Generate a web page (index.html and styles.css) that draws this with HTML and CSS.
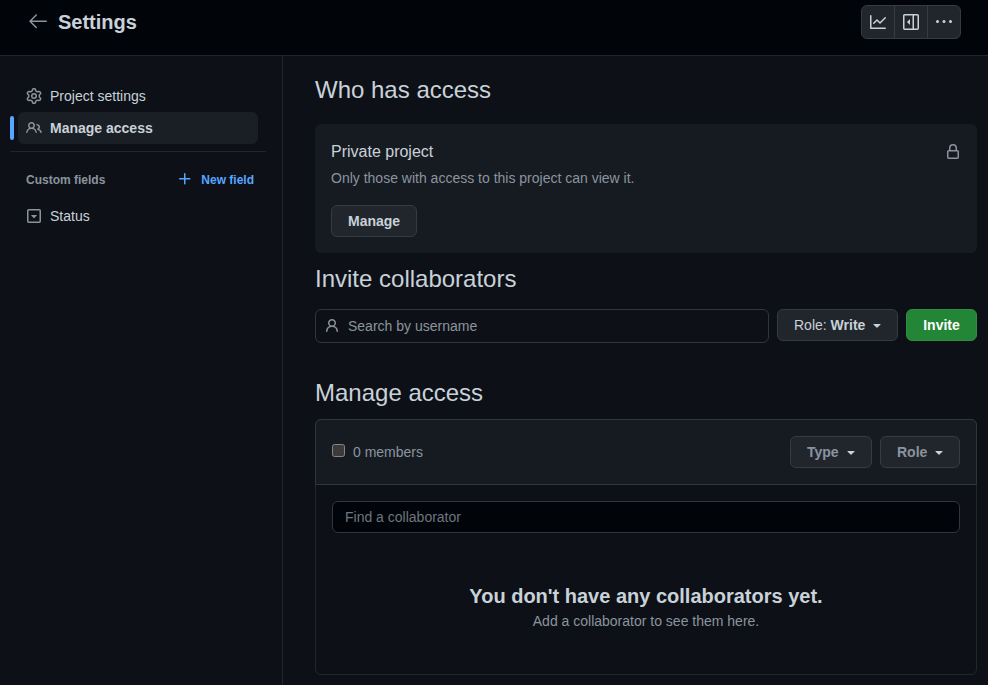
FILE: index.html
```html
<!DOCTYPE html>
<html lang="en">
<head>
<meta charset="utf-8">
<title>Settings</title>
<link rel="stylesheet" href="styles.css">
</head>
<body>
<header class="topbar">
  <svg class="back" width="24" height="24" viewBox="0 0 24 24"><path d="M10.78 19.03a.75.75 0 0 1-1.06 0l-6.25-6.25a.75.75 0 0 1 0-1.06l6.25-6.25a.749.749 0 0 1 1.275.326.749.749 0 0 1-.215.734L5.81 11.5h14.44a.75.75 0 0 1 0 1.5H5.81l4.97 4.97a.75.75 0 0 1 0 1.06Z"/></svg>
  <h1 class="title">Settings</h1>
  <div class="button-group">
    <button class="group-button"><svg width="16" height="16" viewBox="0 0 16 16"><path d="M1.5 1.75V13.5h13.75a.75.75 0 0 1 0 1.5H.75a.75.75 0 0 1-.75-.75V1.75a.75.75 0 0 1 1.5 0Zm14.28 2.53-5.25 5.25a.75.75 0 0 1-1.06 0L7 7.06 4.28 9.78a.751.751 0 0 1-1.042-.018.751.751 0 0 1-.018-1.042l3.25-3.25a.75.75 0 0 1 1.06 0L10 7.94l4.72-4.72a.751.751 0 0 1 1.042.018.751.751 0 0 1 .018 1.042Z"/></svg></button>
    <button class="group-button"><svg width="16" height="16" viewBox="0 0 16 16"><path d="m4.177 7.823 2.396-2.396A.25.25 0 0 1 7 5.604v4.792a.25.25 0 0 1-.427.177L4.177 8.177a.25.25 0 0 1 0-.354Z"/><path d="M0 1.75C0 .784.784 0 1.75 0h12.5C15.216 0 16 .784 16 1.75v12.5A1.75 1.75 0 0 1 14.25 16H1.75A1.75 1.75 0 0 1 0 14.25Zm1.75-.25a.25.25 0 0 0-.25.25v12.5c0 .138.112.25.25.25H9.5v-13Zm12.5 13a.25.25 0 0 0 .25-.25V1.75a.25.25 0 0 0-.25-.25H11v13Z"/></svg></button>
    <button class="group-button"><svg width="16" height="16" viewBox="0 0 16 16"><circle cx="1.5" cy="7.5" r="1.5"/><circle cx="8" cy="7.5" r="1.5"/><circle cx="14.5" cy="7.5" r="1.5"/></svg></button>
  </div>
</header>
<div class="layout">
  <nav class="sidebar">
    <a class="nav-item"><svg width="16" height="16" viewBox="0 0 16 16"><path d="M8 0a8.2 8.2 0 0 1 .701.031C9.444.095 9.99.645 10.16 1.29l.288 1.107c.018.066.079.158.212.224.231.114.454.243.668.386.123.082.233.09.299.071l1.103-.303c.644-.176 1.392.021 1.82.63.27.385.506.792.704 1.218.315.675.111 1.422-.364 1.891l-.814.806c-.049.048-.098.147-.088.294.016.257.016.515 0 .772-.01.147.038.246.088.294l.814.806c.475.469.679 1.216.364 1.891a7.977 7.977 0 0 1-.704 1.217c-.428.61-1.176.807-1.82.63l-1.102-.302c-.067-.019-.177-.011-.3.071a5.909 5.909 0 0 1-.668.386c-.133.066-.194.158-.211.224l-.29 1.106c-.168.646-.715 1.196-1.458 1.26a8.006 8.006 0 0 1-1.402 0c-.743-.064-1.289-.614-1.458-1.26l-.289-1.106c-.018-.066-.079-.158-.212-.224a5.738 5.738 0 0 1-.668-.386c-.123-.082-.233-.09-.299-.071l-1.103.303c-.644.176-1.392-.021-1.82-.63a8.12 8.12 0 0 1-.704-1.218c-.315-.675-.111-1.422.363-1.891l.815-.806c.05-.048.098-.147.088-.294a6.214 6.214 0 0 1 0-.772c.01-.147-.038-.246-.088-.294l-.815-.806C.635 6.045.431 5.298.746 4.623a7.92 7.92 0 0 1 .704-1.217c.428-.61 1.176-.807 1.82-.63l1.102.302c.067.019.177.011.3-.071.214-.143.437-.272.668-.386.133-.066.194-.158.211-.224l.29-1.106C6.009.645 6.556.095 7.299.03 7.53.01 7.764 0 8 0Zm-.571 1.525c-.036.003-.108.036-.137.146l-.289 1.105c-.147.561-.549.967-.998 1.189-.173.086-.34.183-.5.29-.417.278-.97.423-1.529.27l-1.103-.303c-.109-.03-.175.016-.195.045-.22.312-.412.644-.573.99-.014.031-.021.11.059.19l.815.806c.411.406.562.957.53 1.456a4.709 4.709 0 0 0 0 .582c.032.499-.119 1.05-.53 1.456l-.815.806c-.081.08-.073.159-.059.19.162.346.353.677.573.989.02.03.085.076.195.046l1.102-.303c.56-.153 1.113-.008 1.53.27.161.107.328.204.501.29.447.222.85.629.997 1.189l.289 1.105c.029.109.101.143.137.146a6.6 6.6 0 0 0 1.142 0c.036-.003.108-.036.137-.146l.289-1.105c.147-.561.549-.967.998-1.189.173-.086.34-.183.5-.29.417-.278.97-.423 1.529-.27l1.103.303c.109.029.175-.016.195-.045.22-.313.411-.644.573-.99.014-.031.021-.11-.059-.19l-.815-.806c-.411-.406-.562-.957-.53-1.456a4.709 4.709 0 0 0 0-.582c-.032-.499.119-1.05.53-1.456l.815-.806c.081-.08.073-.159.059-.19a6.464 6.464 0 0 0-.573-.989c-.02-.03-.085-.076-.195-.046l-1.102.303c-.56.153-1.113.008-1.53-.27a4.44 4.44 0 0 0-.501-.29c-.447-.222-.85-.629-.997-1.189l-.289-1.105c-.029-.11-.101-.143-.137-.146a6.6 6.6 0 0 0-1.142 0ZM11 8a3 3 0 1 1-6 0 3 3 0 0 1 6 0ZM9.5 8a1.5 1.5 0 1 0-3.001.001A1.5 1.5 0 0 0 9.5 8Z"/></svg>Project settings</a>
    <a class="nav-item active"><svg width="16" height="16" viewBox="0 0 16 16"><path d="M2 5.5a3.5 3.5 0 1 1 5.898 2.549 5.508 5.508 0 0 1 3.034 4.084.75.75 0 1 1-1.482.235 4 4 0 0 0-7.9 0 .75.75 0 0 1-1.482-.236A5.507 5.507 0 0 1 3.102 8.05 3.493 3.493 0 0 1 2 5.5ZM11 4a3.001 3.001 0 0 1 2.22 5.018 5.01 5.01 0 0 1 2.56 3.012.749.749 0 0 1-.885.954.752.752 0 0 1-.549-.514 3.507 3.507 0 0 0-2.522-2.372.75.75 0 0 1-.574-.73v-.352a.75.75 0 0 1 .416-.672A1.5 1.5 0 0 0 11 5.5.75.75 0 0 1 11 4Zm-5.5-.5a2 2 0 1 0-.001 3.999A2 2 0 0 0 5.5 3.5Z"/></svg>Manage access</a>
    <hr class="divider">
    <div class="fields-head">
      <span>Custom fields</span>
      <a class="new-field"><svg width="16" height="16" viewBox="0 0 16 16"><path d="M7.75 2a.75.75 0 0 1 .75.75V7h4.25a.75.75 0 0 1 0 1.5H8.5v4.25a.75.75 0 0 1-1.5 0V8.5H2.75a.75.75 0 0 1 0-1.5H7V2.75A.75.75 0 0 1 7.75 2Z"/></svg>New field</a>
    </div>
    <a class="nav-item"><svg width="16" height="16" viewBox="0 0 16 16"><path d="m5.06 7.356 2.795 2.833c.08.081.21.081.29 0l2.794-2.833c.13-.131.038-.356-.145-.356H5.206c-.183 0-.275.225-.145.356Z"/><path d="M1 2.75C1 1.784 1.784 1 2.75 1h10.5c.966 0 1.75.784 1.75 1.75v10.5A1.75 1.75 0 0 1 13.25 15H2.75A1.75 1.75 0 0 1 1 13.25Zm1.75-.25a.25.25 0 0 0-.25.25v10.5c0 .138.112.25.25.25h10.5a.25.25 0 0 0 .25-.25V2.75a.25.25 0 0 0-.25-.25Z"/></svg>Status</a>
  </nav>
  <main class="content">
    <h2 class="heading">Who has access</h2>
    <section class="privacy">
      <div class="privacy-head">
        <h3 class="privacy-title">Private project</h3>
        <svg class="muted" width="16" height="16" viewBox="0 0 16 16"><path d="M4 4a4 4 0 0 1 8 0v2h.25c.966 0 1.75.784 1.75 1.75v5.5A1.75 1.75 0 0 1 12.25 15h-8.5A1.75 1.75 0 0 1 2 13.25v-5.5C2 6.784 2.784 6 3.75 6H4Zm8.25 3.5h-8.5a.25.25 0 0 0-.25.25v5.5c0 .138.112.25.25.25h8.5a.25.25 0 0 0 .25-.25v-5.5a.25.25 0 0 0-.25-.25ZM10.5 6V4a2.5 2.5 0 1 0-5 0v2Z"/></svg>
      </div>
      <p class="privacy-text">Only those with access to this project can view it.</p>
      <button class="button">Manage</button>
    </section>
    <h2 class="heading">Invite collaborators</h2>
    <div class="invite">
      <div class="search"><svg width="16" height="16" viewBox="0 0 16 16"><path d="M10.561 8.073a6.005 6.005 0 0 1 3.432 5.142.75.75 0 1 1-1.498.07 4.5 4.5 0 0 0-8.99 0 .75.75 0 0 1-1.498-.07 6.004 6.004 0 0 1 3.431-5.142 3.999 3.999 0 1 1 5.123 0ZM10.5 5a2.5 2.5 0 1 0-5 0 2.5 2.5 0 0 0 5 0Z"/></svg><span>Search by username</span></div>
      <button class="button dropdown role-picker"><span class="light">Role: <b>Write</b></span><svg width="16" height="16" viewBox="0 0 16 16"><path d="m4.427 7.427 3.396 3.396a.25.25 0 0 0 .354 0l3.396-3.396A.25.25 0 0 0 11.396 7H4.604a.25.25 0 0 0-.177.427Z"/></svg></button>
      <button class="button primary">Invite</button>
    </div>
    <h2 class="heading">Manage access</h2>
    <section class="members">
      <div class="members-head">
        <input type="checkbox" class="check">
        <span class="count">0 members</span>
        <button class="button dropdown type-filter"><span class="muted-text">Type</span><svg width="16" height="16" viewBox="0 0 16 16"><path d="m4.427 7.427 3.396 3.396a.25.25 0 0 0 .354 0l3.396-3.396A.25.25 0 0 0 11.396 7H4.604a.25.25 0 0 0-.177.427Z"/></svg></button>
        <button class="button dropdown role-filter"><span class="muted-text">Role</span><svg width="16" height="16" viewBox="0 0 16 16"><path d="m4.427 7.427 3.396 3.396a.25.25 0 0 0 .354 0l3.396-3.396A.25.25 0 0 0 11.396 7H4.604a.25.25 0 0 0-.177.427Z"/></svg></button>
      </div>
      <div class="find">Find a collaborator</div>
      <div class="empty">
        <h3 class="empty-title">You don't have any collaborators yet.</h3>
        <p class="empty-text">Add a collaborator to see them here.</p>
      </div>
    </section>
  </main>
</div>
</body>
</html>
```
FILE: styles.css
```css
* { box-sizing: border-box; }
body {
  margin: 0;
  height: 685px;
  overflow: hidden;
  display: flex;
  flex-direction: column;
  background: #0d1117;
  color: #c9d1d9;
  font: 14px/20px "Liberation Sans", Arial, sans-serif;
}
h1, h2, h3, p { margin: 0; }
svg { display: block; flex: none; fill: currentColor; }
button { font: inherit; color: inherit; margin: 0; }

.topbar {
  display: flex;
  align-items: center;
  height: 56px;
  flex: none;
  padding: 0 27px 12px 26px;
  background: #010409;
  border-bottom: 1px solid #21262d;
}
.back { color: #8b949e; margin: 0 8px 2px 0; }
.title { font-size: 20px; line-height: 30px; font-weight: 600; flex: 1; }
.button-group {
  display: flex;
  height: 34px;
  margin-top: 1px;
  border: 1px solid #363b42;
  border-radius: 6px;
  background: #21262d;
}
.group-button {
  width: 32px;
  padding: 0;
  border: 0;
  background: none;
  display: flex;
  align-items: center;
  justify-content: center;
}
.group-button + .group-button { width: 33px; border-left: 1px solid #363b42; }

.layout { display: flex; flex: 1; min-height: 0; }
.sidebar {
  width: 283px;
  flex: none;
  padding: 24px 16px 0 10px;
  border-right: 1px solid #21262d;
}
.nav-item {
  position: relative;
  display: flex;
  align-items: center;
  gap: 8px;
  height: 32px;
  margin: 0 8px;
  padding: 0 8px;
  border-radius: 6px;
}
.nav-item svg { color: #8b949e; }
.active { background: #1a1f26; font-weight: 600; }
.active::before {
  content: "";
  position: absolute;
  left: -8px;
  top: 4px;
  width: 4px;
  height: 24px;
  border-radius: 6px;
  background: #58a6ff;
}
.divider { height: 1px; margin: 7px 0 0; border: 0; background: #21262d; }
.fields-head {
  display: flex;
  justify-content: space-between;
  align-items: center;
  height: 32px;
  margin: 12px 12px 4px 16px;
  color: #8b949e;
  font-size: 12px;
  font-weight: 600;
}
.new-field { display: flex; gap: 8px; align-items: center; color: #58a6ff; }
.new-field svg { margin-bottom: 2px; }

.content { flex: 1; padding: 16px 11px 0 32px; }
.heading { font-size: 24px; line-height: 36px; font-weight: 400; }
.privacy {
  height: 129px;
  margin: 16px 0 8px;
  padding: 16px;
  border-radius: 6px;
  background: #161b22;
}
.privacy-head { display: flex; justify-content: space-between; align-items: center; }
.privacy-title { font-size: 16px; line-height: 24px; font-weight: 400; }
.muted { color: #8b949e; }
.privacy-text { margin: 4px 0 17px; color: #8b949e; }
.button {
  height: 32px;
  padding: 0 16px;
  border: 1px solid #363b42;
  border-radius: 6px;
  background: #21262d;
  font-weight: 600;
  line-height: 20px;
  white-space: nowrap;
}
.dropdown {
  display: flex;
  align-items: center;
  justify-content: space-between;
  padding-right: 12px;
}
.light { font-weight: 400; }
.light b { font-weight: 600; }
.muted-text { color: #8b949e; }
.role-picker { width: 121px; }
.type-filter { width: 82px; margin-right: 8px; }
.role-filter { width: 80px; }
.primary { width: 71px; background: #238636; border-color: #2f8e41; color: #fff; }
.invite { display: flex; align-items: flex-start; gap: 8px; margin: 12px 0 32px; }
.search {
  display: flex;
  align-items: center;
  gap: 8px;
  flex: 1;
  height: 34px;
  padding: 0 8px;
  border: 1px solid #30363d;
  border-radius: 6px;
  color: #8b949e;
}
.members {
  height: 256px;
  margin-top: 8px;
  border: 1px solid #21262d;
  border-radius: 6px;
}
.members-head {
  display: flex;
  align-items: center;
  height: 66px;
  margin: -1px -1px 0;
  padding: 0 16px;
  border: 1px solid #30363d;
  border-radius: 6px 6px 0 0;
  background: #161b22;
}
.check {
  appearance: none;
  width: 13px;
  height: 13px;
  margin: 0 8px 3px 0;
  border: 1px solid #858585;
  border-radius: 2.5px;
  background: #3b3b3b;
}
.count { flex: 1; color: #8b949e; }
.find {
  height: 32px;
  margin: 16px;
  padding: 5px 12px;
  border: 1px solid #30363d;
  border-radius: 6px;
  background: #010409;
  color: #6e7681;
}
.empty { margin-top: 48px; text-align: center; }
.empty-title { font-size: 20px; line-height: 30px; font-weight: 600; }
.empty-text { color: #8b949e; }
```
